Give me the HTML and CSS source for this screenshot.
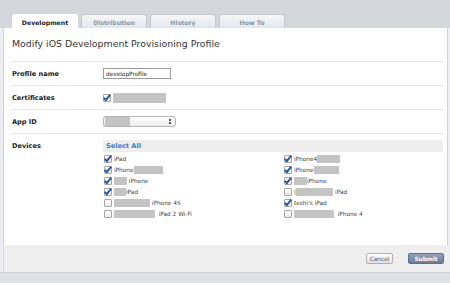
FILE: index.html
```html
<html lang="en">
<head>
    <link rel="stylesheet" href="styles.css">
</head>
<body>
<div class="top">
    <div class="tabs">
        <div class="tab active">Development</div>
        <div class="tab">Distribution</div>
        <div class="tab">History</div>
        <div class="tab">How To</div>
    </div>
</div>

<div class="frame">
    <div class="sheet">
        <h1>Modify iOS Development Provisioning Profile</h1>

        <div class="row">
            <label class="lbl">Profile name</label>
            <div class="field"><span class="text-input">developProfile</span></div>
        </div>
        <div class="row">
            <label class="lbl">Certificates</label>
            <div class="field"><span class="cb on"></span><span class="redact" style="width: 53px; height: 10px;"></span></div>
        </div>
        <div class="row">
            <label class="lbl">App ID</label>
            <div class="field">
                <span class="select"><span class="redact" style="width: 25px; height: 9px;"></span><span class="arrows"></span></span>
            </div>
        </div>
        <div class="row devices">
            <label class="lbl">Devices</label>
            <div class="field">
                <div class="select-all">Select All</div>
                <div class="device-grid">
                    <div class="dev"><span class="cb on"></span>iPad</div>
                    <div class="dev"><span class="cb on"></span>iPhone4<span class="redact" style="width: 23px;"></span></div>
                    <div class="dev"><span class="cb on"></span>iPhone<span class="redact" style="width: 29px;"></span></div>
                    <div class="dev"><span class="cb on"></span>iPhone<span class="redact" style="width: 25px;"></span></div>
                    <div class="dev"><span class="cb on"></span><span class="redact" style="width: 13px;"></span>&nbsp;iPhone</div>
                    <div class="dev"><span class="cb on"></span><span class="redact" style="width: 13px;"></span>iPhone</div>
                    <div class="dev"><span class="cb on"></span><span class="redact" style="width: 12px;"></span>iPad</div>
                    <div class="dev"><span class="cb"></span>(<span class="redact" style="width: 37px;"></span>&nbsp;iPad</div>
                    <div class="dev"><span class="cb"></span><span class="redact" style="width: 36px;"></span>&nbsp;iPhone 4S</div>
                    <div class="dev"><span class="cb on"></span>teshi's iPad</div>
                    <div class="dev"><span class="cb"></span><span class="redact" style="width: 41px;"></span>&nbsp;&nbsp;iPad 2 Wi-Fi</div>
                    <div class="dev"><span class="cb"></span><span class="redact" style="width: 40px;"></span>&nbsp;&nbsp;iPhone 4</div>
                </div>
            </div>
        </div>
    </div>
    <div class="footer">
        <button class="btn">Cancel</button>
        <button class="btn primary">Submit</button>
    </div>
</div>
<div class="bottom"></div>
</body>
</html>
```

FILE: styles.css
```css
body {
    margin: 0;
    background-color: #d4d7db;
    font-family: "DejaVu Sans", sans-serif;
    color: #333;
}

.top {
    height: 28px;
    display: flex;
    align-items: flex-end;
}

.tabs {
    display: flex;
    gap: 3px;
    margin-left: 12px;
}

.tab {
    width: 66px;
    height: 14px;
    line-height: 15px;
    text-align: center;
    font-size: 6.2px;
    font-weight: bold;
    color: #8c97a8;
    background: linear-gradient(#f6f7f9, #e2e6ec);
    border: 1px solid #c5cad2;
    border-bottom: none;
    border-radius: 3px 3px 0 0;
    box-sizing: border-box;
}

.tab.active {
    background: #fff;
    color: #222;
    border-color: #fff;
}

.frame {
    background-color: #eceef1;
    padding: 0 2px 0 3px;
}

.sheet {
    background-color: #fff;
    border-left: 1px solid #cfd3d8;
    border-right: 1px solid #cfd3d8;
    height: 217px;
    padding: 0 4px 0 8px;
}

h1 {
    margin: 0;
    height: 33px;
    line-height: 32px;
    font-size: 9.4px;
    font-weight: normal;
    color: #333;
    border-bottom: 1px solid #e6e6e6;
}

.row {
    display: flex;
    height: 23px;
    align-items: center;
    border-bottom: 1px solid #e6e6e6;
}

.lbl {
    width: 91px;
    font-size: 6.6px;
    font-weight: bold;
    color: #222;
}

.field {
    display: flex;
    align-items: center;
    font-size: 5.8px;
}

.text-input {
    width: 68px;
    height: 11px;
    line-height: 11px;
    border: 1px solid #9a9a9a;
    box-sizing: border-box;
    padding-left: 2px;
    font-size: 5.8px;
    color: #222;
}

.select {
    width: 73px;
    height: 11px;
    border: 1px solid #b4b4b4;
    border-radius: 3px;
    background: linear-gradient(#fff, #ececec);
    box-sizing: border-box;
    display: flex;
    align-items: center;
    padding-left: 1px;
}

.arrows {
    margin-left: auto;
    margin-right: 4px;
    width: 2px;
    height: 5px;
    background: linear-gradient(#555 0 35%, transparent 35% 65%, #555 65%);
}

.redact {
    display: inline-block;
    height: 8px;
    background-color: #c4c4c4;
}

.cb {
    position: relative;
    display: inline-block;
    width: 6px;
    height: 6px;
    border: 1px solid #a6a6a6;
    border-radius: 1px;
    background: linear-gradient(#fff, #e8e8e8);
    margin-right: 2px;
    flex-shrink: 0;
}

.cb.on::after {
    content: "";
    position: absolute;
    left: 1px;
    top: -2px;
    width: 2px;
    height: 6px;
    border-right: 2px solid #2c5aa0;
    border-bottom: 2px solid #2c5aa0;
    transform: rotate(40deg);
}

.row.devices {
    height: auto;
    align-items: flex-start;
    border-bottom: none;
    padding-top: 6px;
}

.row.devices .lbl {
    line-height: 10px;
    padding-top: 1px;
}

.row.devices .field {
    flex-direction: column;
    align-items: stretch;
    flex: 1;
}

.select-all {
    height: 12px;
    line-height: 12px;
    background-color: #eee;
    padding-left: 3px;
    font-size: 6.6px;
    font-weight: bold;
    color: #3b7fd0;
}

.device-grid {
    display: grid;
    grid-template-columns: 180px 1fr;
    padding: 1px 0 0 1px;
}

.dev {
    display: flex;
    align-items: center;
    height: 11px;
    color: #444;
}

.footer {
    height: 27px;
    background-color: #efefef;
    border-left: 1px solid #dcdcdc;
    display: flex;
    justify-content: flex-end;
    align-items: flex-start;
    gap: 15px;
    padding: 8px 4px 0 0;
    box-sizing: border-box;
}

.btn {
    height: 11px;
    width: 27px;
    padding: 0;
    font-family: "DejaVu Sans", sans-serif;
    font-size: 5.8px;
    color: #555;
    border: 1px solid #b2b2b2;
    border-radius: 2px;
    background: linear-gradient(#fdfdfd, #e2e2e2);
}

.btn.primary {
    width: 36px;
    color: #fff;
    font-weight: bold;
    border-color: #5f6f88;
    background: linear-gradient(#94a3ba, #6c7d98);
}

.bottom {
    height: 10px;
    border-top: 1px solid #cdd1d6;
    background-color: #dfe2e7;
}
```
